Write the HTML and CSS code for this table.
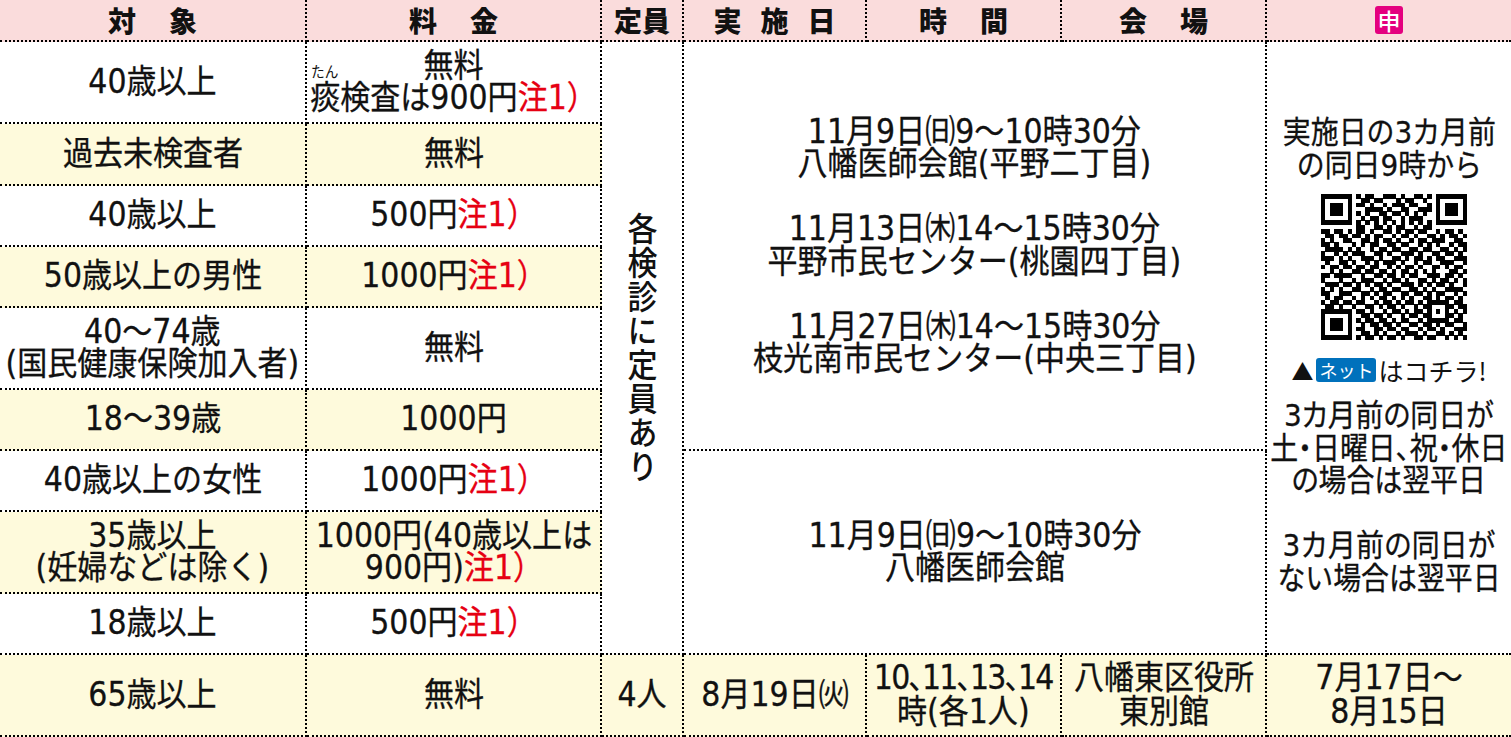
FILE: index.html
```html
<!DOCTYPE html>
<html lang="ja">
<head>
<meta charset="utf-8">
<title>検診日程</title>
<link rel="stylesheet" href="styles.css">
</head>
<body>
<div class="sheet">
  <div class="cell head sp2">対象</div>
  <div class="cell head sp2">料金</div>
  <div class="cell head">定員</div>
  <div class="cell head sp3">実施日</div>
  <div class="cell head sp2">時間</div>
  <div class="cell head sp2">会場</div>
  <div class="cell head last"><span class="mou">申</span></div>

  <div class="cell cap"><p class="vert">各検診に定員あり</p></div>
  <div class="cell sched-a">
    <p class="t">11月9日㈰9〜10時30分<br>八幡医師会館(平野二丁目)</p>
    <p class="t">11月13日㈭14〜15時30分<br>平野市民センター(桃園四丁目)</p>
    <p class="t">11月27日㈭14〜15時30分<br>枝光南市民センター(中央三丁目)</p>
  </div>
  <div class="cell apply last">
    <p class="t">実施日の3カ月前<br>の同日9時から</p>
    <svg class="qr" viewBox="0 0 33 33" width="146" height="146" shape-rendering="crispEdges" aria-label="QRコード">
      <g stroke="#000" stroke-width="1.1" fill="none">
        <path d="M0 0.5h33" stroke-dasharray="7 1 1 1 2 2 3 1 1 2 2 1 1 1 7"/>
        <path d="M0 1.5h33" stroke-dasharray="1 5 1 2 2 1 2 3 1 1 2 2 1 2 1 5 1"/>
        <path d="M0 2.5h33" stroke-dasharray="1 1 3 1 1 1 2 1 1 2 1 1 3 1 2 2 1 1 1 1 3 1 1"/>
        <path d="M0 3.5h33" stroke-dasharray="1 1 3 1 1 3 4 1 1 2 2 2 3 1 1 1 3 1 1"/>
        <path d="M0 4.5h33" stroke-dasharray="1 1 3 1 1 1 1 1 1 2 2 1 2 1 1 1 1 1 1 2 1 1 3 1 1"/>
        <path d="M0 5.5h33" stroke-dasharray="1 5 1 2 1 1 2 1 2 2 1 1 3 3 1 5 1"/>
        <path d="M0 6.5h33" stroke-dasharray="7 1 1 1 1 1 1 1 1 1 1 1 1 1 1 1 1 1 1 1 7"/>
        <path d="M0 7.5h33" stroke-dasharray="0 8 2 2 2 1 1 1 2 2 1 1 2 8"/>
        <path d="M0 8.5h33" stroke-dasharray="2 1 2 1 1 1 2 1 1 2 2 1 1 1 2 1 2 2 1 1 2 1 1 1"/>
        <path d="M0 9.5h33" stroke-dasharray="0 1 2 1 2 1 2 1 1 1 2 2 1 1 2 1 1 2 2 1 1 1 2 1 1"/>
        <path d="M0 10.5h33" stroke-dasharray="1 1 1 2 2 2 2 1 1 1 2 1 1 2 1 1 2 1 3 2 2 1"/>
        <path d="M0 11.5h33" stroke-dasharray="2 1 1 3 1 1 1 1 2 2 2 1 2 2 1 1 1 1 1 2 1 1 2 9"/>
        <path d="M0 12.5h33" stroke-dasharray="0 1 4 1 1 1 1 2 1 1 2 1 2 2 2 1 2 2 2 1 1 1 1 9"/>
        <path d="M0 13.5h33" stroke-dasharray="1 2 1 1 1 1 3 2 2 1 1 2 3 1 1 2 2 1 2 1 1 1"/>
        <path d="M0 14.5h33" stroke-dasharray="3 1 1 1 1 2 3 1 1 2 2 1 1 1 2 1 1 1 2 2 3 9"/>
        <path d="M0 15.5h33" stroke-dasharray="0 1 1 2 2 1 1 2 1 1 1 1 3 1 1 2 1 1 2 2 3 2 1 9"/>
        <path d="M0 16.5h33" stroke-dasharray="1 1 2 1 2 1 2 1 2 2 1 1 1 1 2 1 1 2 2 1 1 1 2 1"/>
        <path d="M0 17.5h33" stroke-dasharray="0 2 1 1 1 2 2 1 2 1 2 1 1 1 2 1 1 1 1 1 1 3 2 1 1 9"/>
        <path d="M0 18.5h33" stroke-dasharray="2 1 4 2 1 2 2 1 2 1 1 1 2 2 3 1 2 1 1 1"/>
        <path d="M0 19.5h33" stroke-dasharray="1 3 1 2 1 1 3 2 1 1 2 1 1 2 2 1 1 1 2 1 1 1 1 9"/>
        <path d="M0 20.5h33" stroke-dasharray="0 1 3 1 2 1 1 1 1 1 2 1 1 2 3 1 1 1 1 1 2 1 1 2 1 9"/>
        <path d="M0 21.5h33" stroke-dasharray="1 1 1 1 1 2 2 2 1 1 2 1 2 2 2 1 1 1 1 2 4 1"/>
        <path d="M0 22.5h33" stroke-dasharray="2 2 3 2 2 1 1 1 2 2 2 1 2 1 1 1 2 2 1 1 1 9"/>
        <path d="M0 23.5h33" stroke-dasharray="0 1 1 1 2 2 1 1 1 1 1 1 2 1 1 1 1 1 1 2 2 1 1 1 2 1 1 1"/>
        <path d="M0 24.5h33" stroke-dasharray="1 1 2 1 2 1 2 2 1 1 2 1 1 1 2 1 1 1 5 1 2 1"/>
        <path d="M0 25.5h33" stroke-dasharray="0 1 2 1 1 2 1 2 2 1 1 1 2 1 1 2 1 1 2 3 2 1 2 9"/>
        <path d="M0 26.5h33" stroke-dasharray="7 1 2 1 1 2 1 1 2 1 1 1 2 1 1 1 1 1 1 1 1 1 1 9"/>
        <path d="M0 27.5h33" stroke-dasharray="1 5 1 2 2 1 2 1 1 2 1 1 2 1 2 3 2 1 1 1"/>
        <path d="M0 28.5h33" stroke-dasharray="1 1 3 1 1 1 1 1 2 1 2 1 1 1 2 2 1 1 5 1 2 1"/>
        <path d="M0 29.5h33" stroke-dasharray="1 1 3 1 1 2 1 1 2 1 2 1 1 2 2 1 2 1 1 1 2 2 1 9"/>
        <path d="M0 30.5h33" stroke-dasharray="1 1 3 1 1 1 2 2 2 1 2 1 2 2 1 1 2 1 1 2 3 9"/>
        <path d="M0 31.5h33" stroke-dasharray="1 5 1 2 2 1 1 1 1 2 1 1 3 1 1 2 2 1 1 1 1 1"/>
        <path d="M0 32.5h33" stroke-dasharray="7 1 1 1 2 1 1 1 2 1 1 2 2 1 2 2 1 1 1 1 1 9"/>
      </g>
    </svg>
    <p class="net"><span class="tri">▲</span><span class="badge">ネット</span>はコチラ!</p>
    <p class="t pal">3カ月前の同日が<br>土・日曜日、祝・休日<br>の場合は翌平日</p>
    <p class="t gap">3カ月前の同日が<br>ない場合は翌平日</p>
  </div>

  <div class="cell"><p class="t">40歳以上</p></div>
  <div class="cell"><p class="t">無料<br><span class="rb">痰<span class="rt">たん</span></span>検査は900円<span class="note">注1）</span></p></div>

  <div class="cell y"><p class="t">過去未検査者</p></div>
  <div class="cell y"><p class="t">無料</p></div>

  <div class="cell"><p class="t">40歳以上</p></div>
  <div class="cell"><p class="t">500円<span class="note">注1）</span></p></div>

  <div class="cell y"><p class="t">50歳以上の男性</p></div>
  <div class="cell y"><p class="t">1000円<span class="note">注1）</span></p></div>

  <div class="cell"><p class="t">40〜74歳<br>(国民健康保険加入者)</p></div>
  <div class="cell"><p class="t">無料</p></div>

  <div class="cell y"><p class="t">18〜39歳</p></div>
  <div class="cell y"><p class="t">1000円</p></div>

  <div class="cell"><p class="t">40歳以上の女性</p></div>
  <div class="cell"><p class="t">1000円<span class="note">注1）</span></p></div>
  <div class="cell sched-b">
    <p class="t">11月9日㈰9〜10時30分<br>八幡医師会館</p>
  </div>

  <div class="cell y"><p class="t">35歳以上<br>(妊婦などは除く)</p></div>
  <div class="cell y"><p class="t">1000円(40歳以上は<br>900円)<span class="note">注1）</span></p></div>

  <div class="cell"><p class="t">18歳以上</p></div>
  <div class="cell"><p class="t">500円<span class="note">注1）</span></p></div>

  <div class="cell y"><p class="t">65歳以上</p></div>
  <div class="cell y"><p class="t">無料</p></div>
  <div class="cell y"><p class="t">4人</p></div>
  <div class="cell y"><p class="t">8月19日㈫</p></div>
  <div class="cell y tight"><p class="t pal"><span class="cond">10、11、13、14</span><br>時(各1人)</p></div>
  <div class="cell y tight"><p class="t">八幡東区役所<br>東別館</p></div>
  <div class="cell y tight last"><p class="t">7月17日〜<br>8月15日</p></div>
</div>
</body>
</html>
```
FILE: styles.css
```css
* {
  box-sizing: border-box;
}

html, body {
  margin: 0;
  background: #fff;
}

body {
  font-family: "Noto Sans CJK JP", "Noto Sans", sans-serif;
  color: #111;
}

p {
  margin: 0;
}

.sheet {
  display: grid;
  width: 1511px;
  grid-template-columns: 307px 295px 82px 183px 195px 205px 244px;
  grid-template-rows: 42px 82px 62px 61px 61px 82px 61px 61px 82px 61px 82px;
}

.cell {
  display: flex;
  flex-direction: column;
  align-items: center;
  justify-content: center;
  text-align: center;
  border-right: 2px dotted #000;
  border-bottom: 2px dotted #000;
  font-size: 33px;
  font-weight: 500;
  line-height: 32.5px;
  white-space: nowrap;
}

.cell.last {
  border-right: none;
}

.t {
  font-family: "DejaVu Sans", "Noto Sans CJK JP", sans-serif;
  font-weight: 400;
  transform: scaleX(0.91);
  -webkit-text-stroke: 0.3px #111;
}

.t .note {
  -webkit-text-stroke-color: #e60012;
}

.cond {
  letter-spacing: -1.9px;
}

.head {
  background: #fadcdc;
  font-size: 28px;
  font-weight: 900;
  line-height: 40px;
}

.sp2 {
  letter-spacing: 33px;
  text-indent: 33px;
}

.sp3 {
  letter-spacing: 19px;
  text-indent: 19px;
}

.mou {
  display: inline-block;
  width: 28px;
  height: 28px;
  border-radius: 3px;
  background: #e4007f;
  color: #fff;
  font-size: 23px;
  font-weight: 500;
  line-height: 28px;
}

.y {
  background: #fefadc;
}

.note {
  color: #e60012;
}

.rb {
  position: relative;
}

.rt {
  position: absolute;
  left: 1px;
  top: -15px;
  font-family: "Noto Sans CJK JP", sans-serif;
  font-size: 15px;
  line-height: 15px;
  -webkit-text-stroke: 0;
}

.cap {
  grid-column: 3;
  grid-row: 2 / 11;
}

.vert {
  writing-mode: vertical-rl;
  letter-spacing: 1px;
  transform: scaleX(0.91);
}

.sched-a {
  grid-column: 4 / 7;
  grid-row: 2 / 8;
  gap: 32.5px;
}

.sched-b {
  grid-column: 4 / 7;
  grid-row: 8 / 11;
}

.apply {
  grid-column: 7;
  grid-row: 2 / 11;
  justify-content: flex-start;
  padding-top: 74px;
  font-size: 31px;
}

.apply .t {
  transform: scaleX(0.9);
}

.qr {
  display: block;
  margin-top: 13px;
  margin-left: 10px;
}

.net {
  display: flex;
  align-items: center;
  margin-top: 14px;
  font-size: 25px;
  font-weight: 400;
  line-height: 32px;
}

.tri {
  font-size: 22px;
  margin-right: 3px;
}

.badge {
  display: inline-block;
  background: #0071bc;
  color: #fff;
  font-size: 18px;
  line-height: 24px;
  padding: 0 3px;
  border-radius: 3px;
  margin-right: 2px;
}

.pal {
  font-feature-settings: "palt";
}

.apply .pal {
  margin-top: 13px;
}

.gap {
  margin-top: 32.5px;
}

.tight {
  line-height: 34px;
}
```
